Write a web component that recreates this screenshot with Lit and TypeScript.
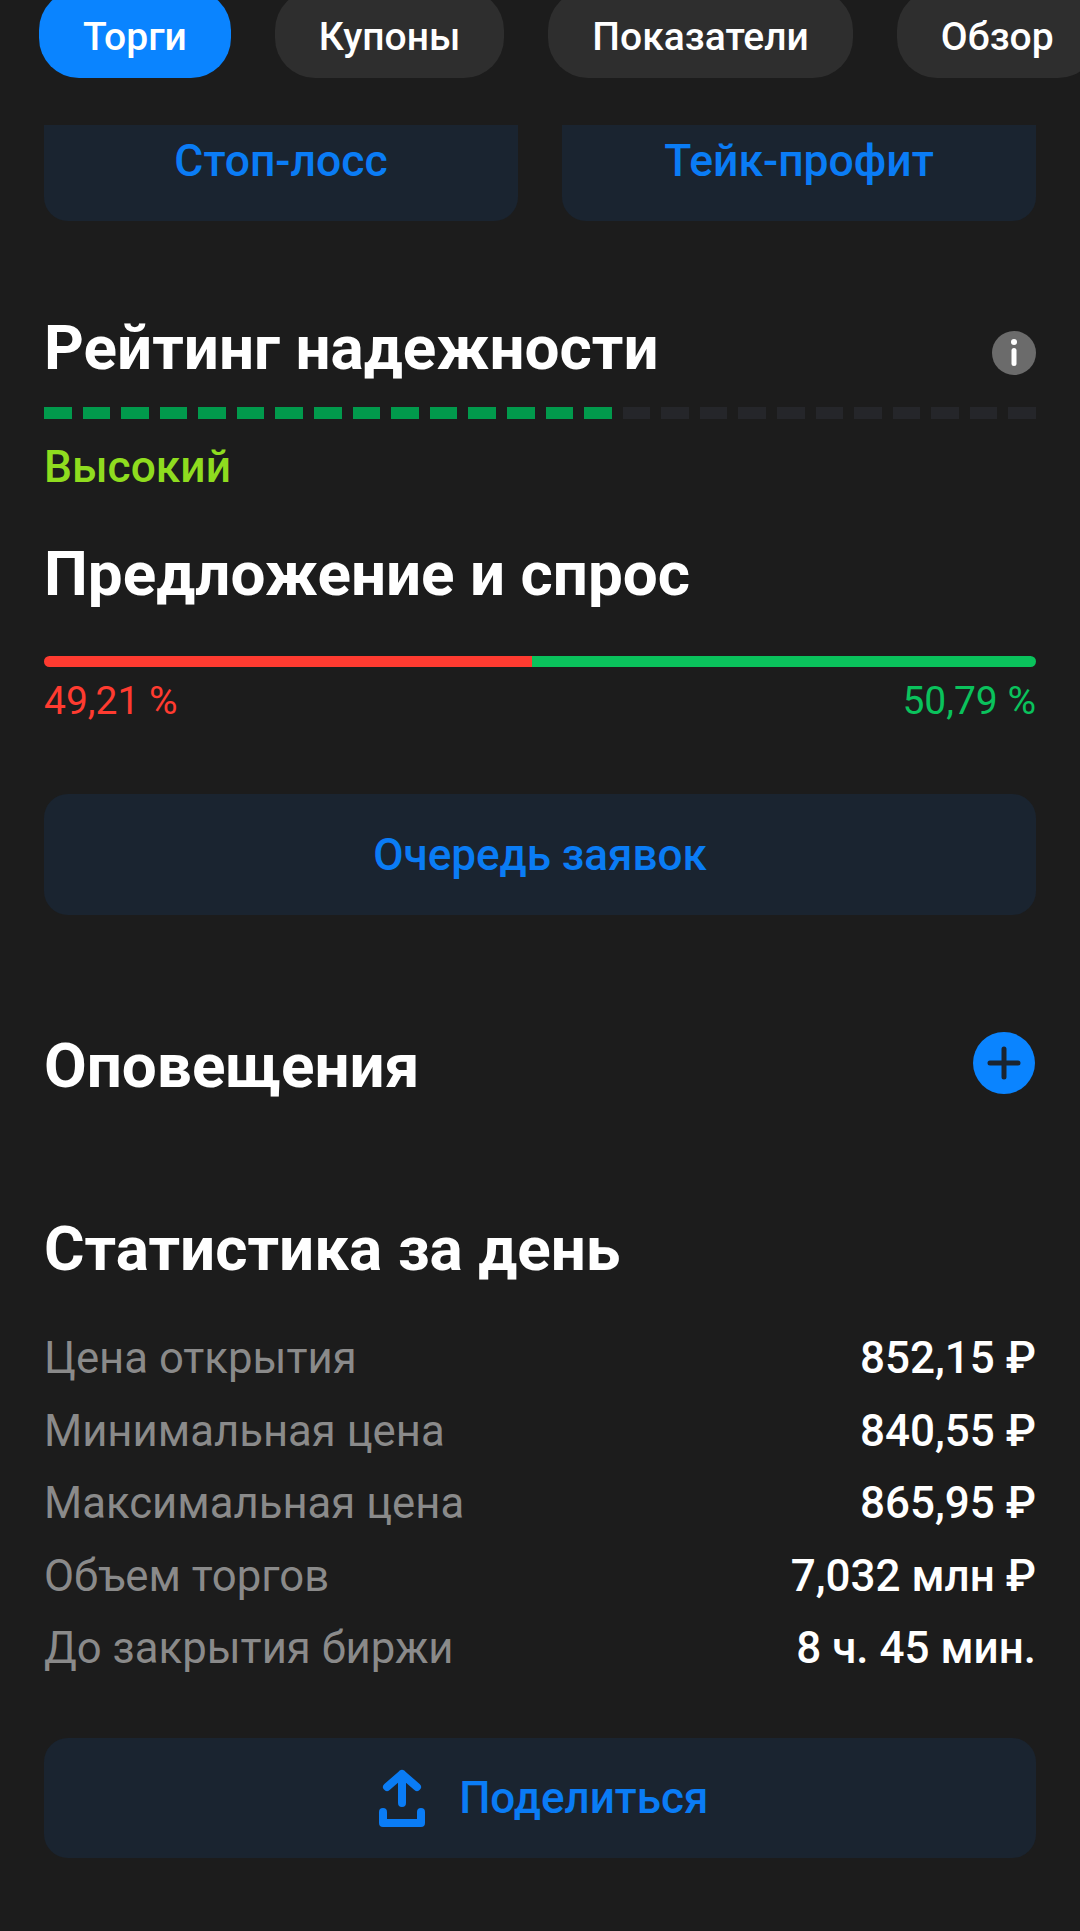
import { LitElement, html, css } from 'lit';
import { customElement } from 'lit/decorators.js';

const STATS = [
  ['Цена открытия', '852,15 ₽'],
  ['Минимальная цена', '840,55 ₽'],
  ['Максимальная цена', '865,95 ₽'],
  ['Объем торгов', '7,032 млн ₽'],
  ['До закрытия биржи', '8 ч. 45 мин.'],
];

const TABS = ['Торги', 'Купоны', 'Показатели', 'Обзор'];

@customElement('app-root')
export class AppRoot extends LitElement {
  static styles = css`
    :host {
      display: block;
      width: 1080px;
      height: 1931px;
      overflow: hidden;
      background: #1c1c1c;
      font-family: Roboto, 'Noto Sans', sans-serif;
      color: #fff;
    }

    .tabs {
      display: flex;
      align-items: flex-end;
      gap: 44px;
      height: 78px;
      padding-left: 39px;
      overflow: hidden;
    }

    .tab {
      flex: none;
      display: flex;
      align-items: center;
      justify-content: center;
      height: 88px;
      padding: 6px 44px 0;
      box-sizing: border-box;
      border-radius: 40px;
      background: #2e2e2e;
      font-size: 39px;
      font-weight: 500;
    }

    .tab.active {
      background: #0a84ff;
    }

    .content {
      padding: 47px 44px 0 44px;
    }

    .order-buttons {
      display: grid;
      grid-template-columns: 474px 474px;
      gap: 44px;
    }

    .soft-button {
      display: flex;
      align-items: center;
      justify-content: center;
      background: #1a2430;
      color: #0a7cf5;
      font-weight: 500;
    }

    .order-buttons .soft-button {
      height: 96px;
      padding-bottom: 24px;
      box-sizing: border-box;
      border-radius: 0 0 24px 24px;
      font-size: 44.5px;
    }

    h2 {
      margin: 0;
      font-size: 62px;
      line-height: 66px;
      font-weight: 700;
    }

    .rating-head {
      display: flex;
      align-items: center;
      justify-content: space-between;
      margin-top: 94px;
    }

    .info {
      width: 44px;
      height: 44px;
      display: block;
      margin-top: 10px;
    }

    .segments {
      display: grid;
      grid-template-columns: repeat(26, 1fr);
      gap: 11px;
      margin-top: 26px;
    }

    .segment {
      height: 12px;
      background: #25262a;
    }

    .segment.on {
      background: #019a4c;
    }

    .rating-label {
      margin-top: 24px;
      font-size: 44.3px;
      line-height: 48px;
      font-weight: 500;
      color: #8fdc1f;
    }

    .demand-title {
      margin-top: 50px;
    }

    .demand-bar {
      display: flex;
      height: 11px;
      margin-top: 49px;
      border-radius: 6px;
      overflow: hidden;
    }

    .demand-bar .ask {
      width: 49.21%;
      background: #ff3b30;
    }

    .demand-bar .bid {
      flex: 1;
      background: #0ac25c;
    }

    .demand-values {
      display: flex;
      justify-content: space-between;
      margin-top: 12px;
      font-size: 39px;
      line-height: 44px;
    }

    .demand-values .ask {
      color: #ff3b30;
    }

    .demand-values .bid {
      color: #0ac25c;
    }

    .queue {
      height: 121px;
      margin-top: 71px;
      border-radius: 24px;
      font-size: 44px;
    }

    .alerts {
      display: flex;
      align-items: center;
      justify-content: space-between;
      margin-top: 112px;
    }

    .alerts h2 {
      padding-top: 6px;
    }

    .add {
      display: block;
      width: 62px;
      height: 62px;
      margin-right: 1px;
    }

    .stats-title {
      margin-top: 117px;
    }

    .stats {
      margin-top: 40px;
    }

    .stat {
      display: flex;
      justify-content: space-between;
      height: 72.5px;
      align-items: center;
      font-size: 44px;
    }

    .stat .name {
      color: #8a8a8a;
      font-size: 43.7px;
    }

    .stat .value {
      font-weight: 500;
    }

    .share {
      gap: 34.5px;
      height: 120px;
      margin-top: 53px;
      padding-left: 7px;
      border-radius: 24px;
      font-size: 44px;
    }

    .share svg {
      display: block;
      width: 46px;
      height: 58px;
    }
  `;

  render() {
    return html`
      <div class="tabs">
        ${TABS.map(
          (t, i) => html`<div class="tab ${i === 0 ? 'active' : ''}">${t}</div>`
        )}
      </div>
      <div class="content">
        <div class="order-buttons">
          <div class="soft-button">Стоп-лосс</div>
          <div class="soft-button">Тейк-профит</div>
        </div>

        <div class="rating-head">
          <h2>Рейтинг надежности</h2>
          <svg class="info" viewBox="0 0 44 44">
            <circle cx="22" cy="22" r="22" fill="#6b6b6b" />
            <circle cx="22" cy="11" r="3" fill="#fff" />
            <rect x="19.5" y="17" width="5" height="18" rx="2.5" fill="#fff" />
          </svg>
        </div>
        <div class="segments">
          ${Array.from(
            { length: 26 },
            (_, i) => html`<div class="segment ${i < 15 ? 'on' : ''}"></div>`
          )}
        </div>
        <div class="rating-label">Высокий</div>

        <h2 class="demand-title">Предложение и спрос</h2>
        <div class="demand-bar">
          <div class="ask"></div>
          <div class="bid"></div>
        </div>
        <div class="demand-values">
          <span class="ask">49,21 %</span>
          <span class="bid">50,79 %</span>
        </div>

        <div class="soft-button queue">Очередь заявок</div>

        <div class="alerts">
          <h2>Оповещения</h2>
          <svg class="add" viewBox="0 0 62 62">
            <circle cx="31" cy="31" r="31" fill="#0a84ff" />
            <path
              d="M31 17v28M17 31h28"
              stroke="#1a2430"
              stroke-width="5"
              stroke-linecap="round"
            />
          </svg>
        </div>

        <h2 class="stats-title">Статистика за день</h2>
        <div class="stats">
          ${STATS.map(
            ([name, value]) => html`
              <div class="stat">
                <span class="name">${name}</span>
                <span class="value">${value}</span>
              </div>
            `
          )}
        </div>

        <div class="soft-button share">
          <svg viewBox="0 0 46 58">
            <path
              d="M23 34V5M8 18 23 5l15 13"
              fill="none"
              stroke="#0a7cf5"
              stroke-width="8"
              stroke-linecap="round"
              stroke-linejoin="round"
            />
            <path
              d="M4 43v11h38V43"
              fill="none"
              stroke="#0a7cf5"
              stroke-width="8"
              stroke-linecap="round"
              stroke-linejoin="round"
            />
          </svg>
          <span>Поделиться</span>
        </div>
      </div>
    `;
  }
}
